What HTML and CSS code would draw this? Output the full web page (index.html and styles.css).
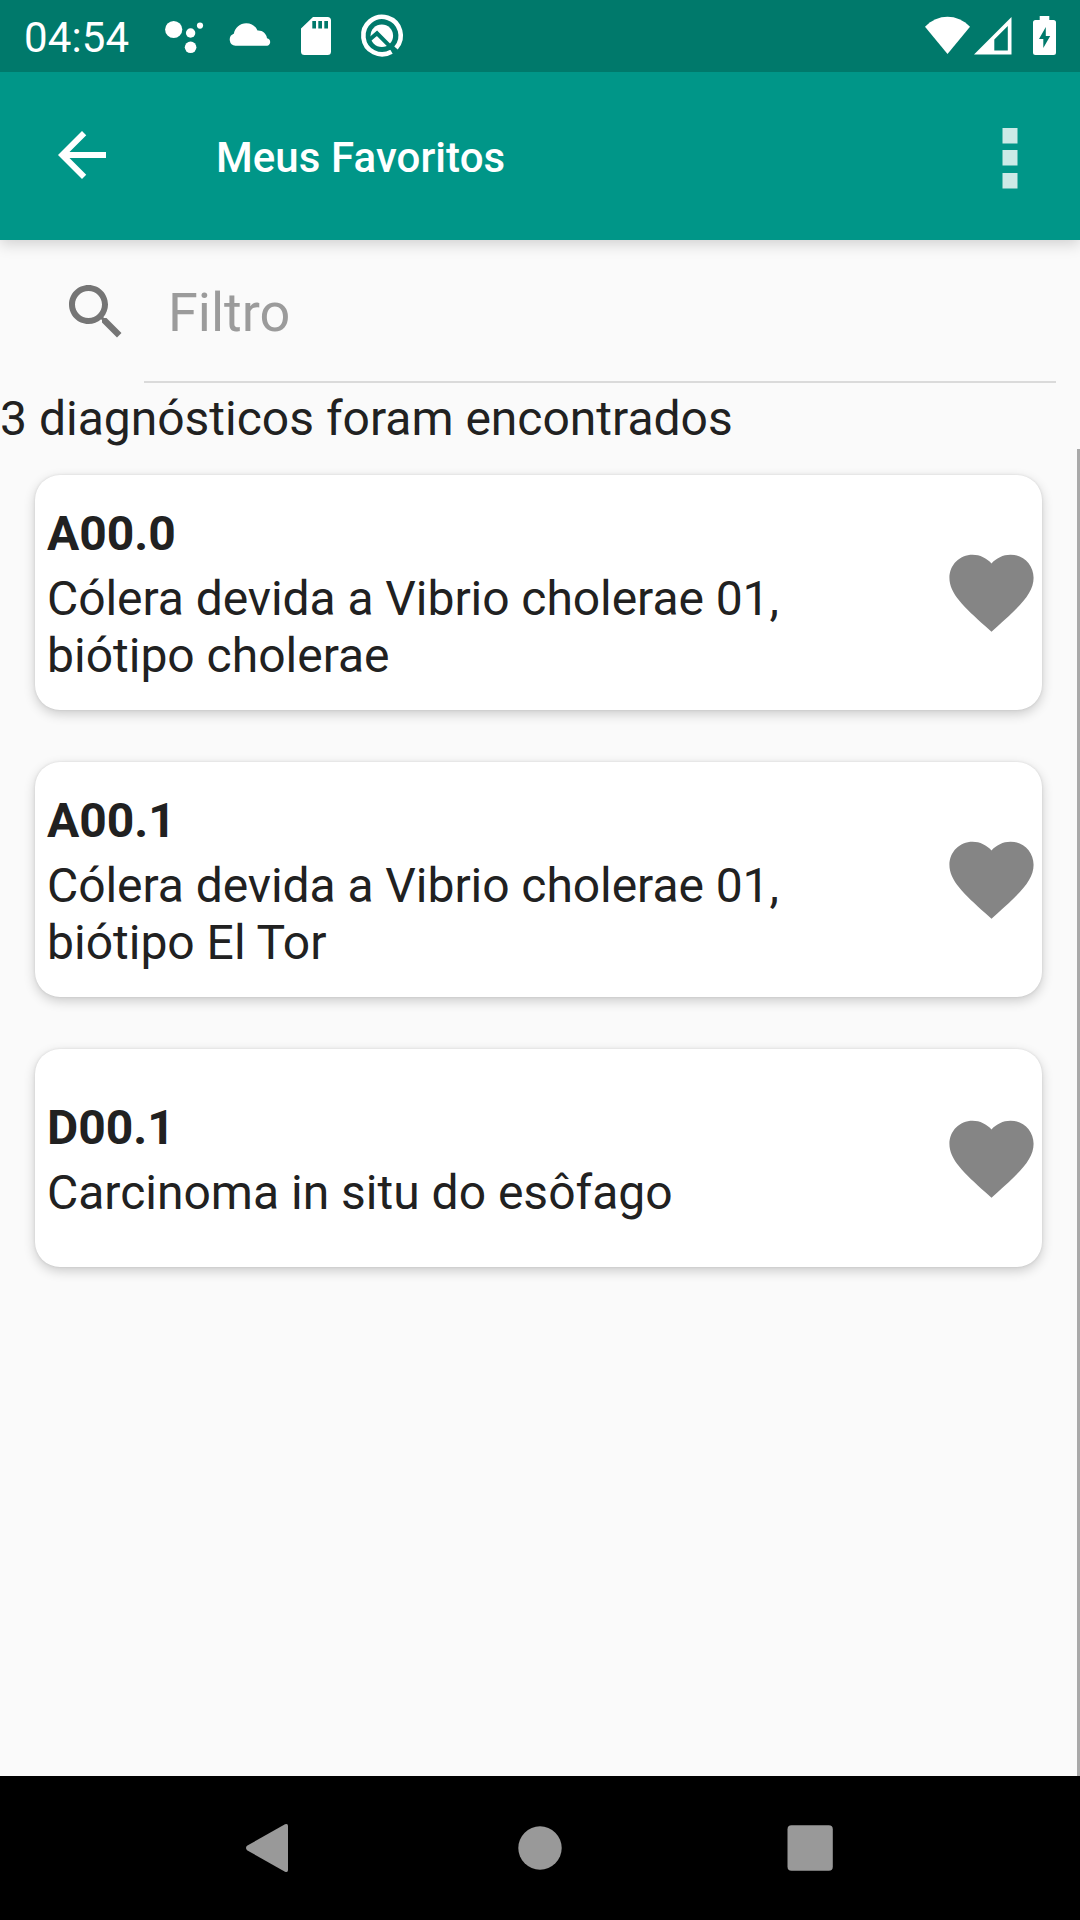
FILE: index.html
```html
<!DOCTYPE html>
<html lang="pt-BR">
<head>
<meta charset="utf-8">
<title>Meus Favoritos</title>
<link rel="stylesheet" href="styles.css">
</head>
<body>
<div class="screen">
  <header class="status">
    <span class="clock">04:54</span>
    <svg class="notifications" width="250" height="72" viewBox="160 0 250 72">
      <g fill="#fff">
        <circle cx="173.7" cy="29.5" r="8.6"/>
        <circle cx="190.6" cy="33" r="4.7"/>
        <circle cx="200" cy="25.6" r="3.1"/>
        <circle cx="190.6" cy="47.3" r="5.8"/>
        <path d="M235.500 45.800A6.200 6.200 0 0 1 233.800 33.800C235 27.500 240 23.200 246.200 23.200C251.500 23.200 255.500 26 257.500 30.600C262.500 30.200 266.500 33.800 267 38.200A3.900 3.900 0 0 1 267.300 45.800Z"/>
        <path fill-rule="evenodd" d="M313 17h14.500a3.500 3.500 0 0 1 3.500 3.500v31a3.500 3.500 0 0 1-3.500 3.500h-23a3.500 3.500 0 0 1-3.500-3.500V28.500zM312.300 21v7.500h3.700V21zM318.300 21v7.500h3.700V21zM324.300 21v7.500h3.700V21z"/>
        <circle cx="381.800" cy="35.700" r="11.300"/>
      </g>
      <path d="M396 48A18.700 18.700 0 1 0 391.500 51.700" fill="none" stroke="#fff" stroke-width="4.600"/>
      <path d="M370 39.300l7-6 18 18" fill="none" stroke="#00796b" stroke-width="4"/>
    </svg>
    <svg class="system" width="140" height="72" viewBox="920 0 140 72">
      <path fill="#fff" d="M925 26.700C938 13.400 957 13.400 970 26.700L947.500 54z"/>
      <path fill="#fff" fill-rule="evenodd" d="M1011.500 17v37.500H974zM1007.800 26L994.300 39.500V50.500h13.500z"/>
      <path fill="#fff" fill-rule="evenodd" d="M1039.700 16h9.600v4h4.200a2.500 2.500 0 0 1 2.500 2.500v30a2.500 2.500 0 0 1-2.500 2.500h-18a2.500 2.500 0 0 1-2.500-2.500v-30a2.500 2.500 0 0 1 2.500-2.500h4.200zM1045.800 27l-6.800 12h4.300v9l6.900-12h-4.400z"/>
    </svg>
  </header>

  <div class="toolbar">
    <svg class="back" width="72" height="72" viewBox="0 0 24 24"><path fill="#fff" d="M20 11H7.830l5.590-5.590L12 4l-8 8 8 8 1.410-1.410L7.830 13H20z"/></svg>
    <h1 class="title">Meus Favoritos</h1>
    <svg class="overflow" width="16" height="62" viewBox="0 0 16 62"><path fill="#fff" fill-opacity=".8" d="M.5 0h15v15.500H.5zM.5 22h15v15.500H.5zM.5 45h15v15.500H.5z"/></svg>
  </div>

  <main class="content">
    <div class="search">
      <svg class="search-icon" width="72" height="72" viewBox="0 0 24 24"><path fill="#757575" d="M15.500 14h-.79l-.28-.27C15.410 12.590 16 11.110 16 9.500 16 5.910 13.090 3 9.500 3S3 5.910 3 9.500 5.910 16 9.500 16c1.610 0 3.090-.59 4.230-1.570l.27.28v.79l5 4.990L20.490 19l-4.990-5zm-6 0C7.010 14 5 11.990 5 9.500S7.010 5 9.500 5 14 7.010 14 9.500 11.990 14 9.500 14z"/></svg>
      <div class="field">Filtro</div>
    </div>
    <p class="count">3 diagnósticos foram encontrados</p>
    <section class="list">
      <article class="card">
        <div class="info"><h2 class="code">A00.0</h2><p class="name"><span class="tight">Cólera devida a Vibrio cholerae 01,</span><br>biótipo cholerae</p></div>
        <svg class="heart" width="102" height="102" viewBox="0 0 24 24"><path d="M12 21.350l-1.450-1.320C5.400 15.360 2 12.280 2 8.500 2 5.420 4.420 3 7.500 3c1.740 0 3.410.81 4.500 2.090C13.090 3.810 14.760 3 16.500 3 19.580 3 22 5.420 22 8.500c0 3.780-3.400 6.860-8.550 11.540z"/></svg>
      </article>
      <article class="card">
        <div class="info"><h2 class="code">A00.1</h2><p class="name"><span class="tight">Cólera devida a Vibrio cholerae 01,</span><br>biótipo El Tor</p></div>
        <svg class="heart" width="102" height="102" viewBox="0 0 24 24"><path d="M12 21.350l-1.450-1.320C5.400 15.360 2 12.280 2 8.500 2 5.420 4.420 3 7.500 3c1.740 0 3.410.81 4.500 2.090C13.090 3.810 14.760 3 16.500 3 19.580 3 22 5.420 22 8.500c0 3.780-3.400 6.860-8.550 11.540z"/></svg>
      </article>
      <article class="card card-short">
        <div class="info"><h2 class="code">D00.1</h2><p class="name">Carcinoma in situ do esôfago</p></div>
        <svg class="heart" width="102" height="102" viewBox="0 0 24 24"><path d="M12 21.350l-1.450-1.320C5.400 15.360 2 12.280 2 8.500 2 5.420 4.420 3 7.500 3c1.740 0 3.410.81 4.500 2.090C13.090 3.810 14.760 3 16.500 3 19.580 3 22 5.420 22 8.500c0 3.780-3.400 6.860-8.550 11.540z"/></svg>
      </article>
      <div class="scrollbar"></div>
    </section>
  </main>

  <nav class="navbar">
    <svg width="54" height="54" viewBox="243 1821 54 54"><path fill="#999" d="M285 1824.300Q288 1823 288 1826V1870Q288 1873 285 1871.700L247 1850.200Q245 1848 247 1845.800z"/></svg>
    <svg width="54" height="54" viewBox="-27 -27 54 54"><circle r="21.700" fill="#999"/></svg>
    <svg width="54" height="54" viewBox="0 0 54 54"><rect x="4.500" y="4.300" width="45.300" height="45.400" rx="4" fill="#999"/></svg>
  </nav>
</div>
</body>
</html>
```
FILE: styles.css
```css
* { box-sizing: border-box; margin: 0; padding: 0; }
body { background: #fafafa; font-family: Roboto, sans-serif; color: #212121; }
svg { display: block; flex: none; }
.screen { width: 1080px; height: 1920px; display: flex; flex-direction: column; overflow: hidden; }

.status { position: relative; z-index: 1; height: 72px; flex: none; display: flex; background: #00796b; }
.clock { width: 136px; margin-left: 24px; font-size: 42px; line-height: 75px; letter-spacing: .15px; color: #fff; }
.system { margin: 0 20px 0 auto; }

.toolbar { position: relative; height: 168px; flex: none; display: flex; background: #009688; box-shadow: 0 4px 14px rgba(0, 0, 0, .17); }
.back { margin: 47px 0 0 46px; }
.title { margin-left: 98px; padding-top: 2px; font-size: 42px; font-weight: 500; line-height: 167px; letter-spacing: .07px; color: #fff; }
.overflow { margin: 56px 62px 0 auto; }

.content { flex: 1; display: flex; flex-direction: column; }
.search { height: 143px; flex: none; display: flex; padding-right: 24px; }
.search-icon { margin: 36px 12px 0 60px; }
.field { flex: 1; padding-left: 24px; font-size: 54px; line-height: 145px; height: 143px; color: #9b9b9b; border-bottom: 2px solid #dadada; }
.count { height: 66px; flex: none; padding-top: 1px; font-size: 48px; line-height: 70px; }

.list { position: relative; flex: 1; display: flex; flex-direction: column; gap: 52px; padding: 26px 38px 0 35px; }
.card { height: 235px; display: flex; align-items: center; padding-left: 12px; background: #fff; border-radius: 25px; box-shadow: 0 4px 12px rgba(0, 0, 0, .19), 0 0 3px rgba(0, 0, 0, .1); }
.card-short { height: 218px; }
.info { flex: 1; }
.code { margin-bottom: 4px; font-size: 48px; font-weight: 700; line-height: 65px; }
.name { font-size: 48px; line-height: 57px; }
.tight { letter-spacing: -.06px; }
.heart { width: 101px; height: 101px; fill: #858585; }
.scrollbar { position: absolute; top: 0; right: 0; width: 3px; height: 100%; background: #a9a9a9; }

.navbar { height: 144px; flex: none; display: flex; align-items: center; justify-content: space-between; padding: 0 243px; background: #000; }
```
